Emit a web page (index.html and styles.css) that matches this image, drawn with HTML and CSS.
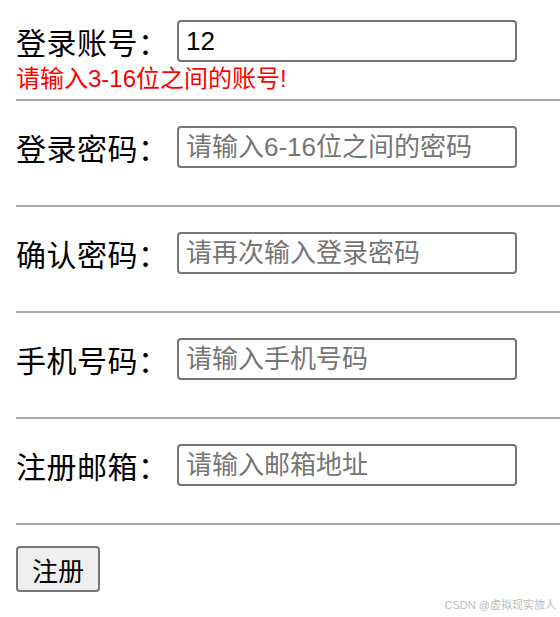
FILE: index.html
```html
<!DOCTYPE html>
<html lang="zh-CN">
  <head>
    <meta charset="UTF-8" />
    <title>注册</title>
    <meta name="viewport" content="width=device-width, initial-scale=1.0" />
    <link rel="stylesheet" href="styles.css">
  </head>
  <body>
    <form class="reg-form" id="reg-form">
      <div class="field first">
        <div class="line">
          <label for="account">登录账号：</label>
          <input type="text" id="account" value="12" />
        </div>
        <div class="tip">请输入3-16位之间的账号!</div>
      </div>
      <hr />
      <div class="field">
        <div class="line">
          <label for="pwd">登录密码：</label>
          <input type="password" id="pwd" placeholder="请输入6-16位之间的密码" />
        </div>
        <div class="tip"></div>
      </div>
      <hr />
      <div class="field">
        <div class="line">
          <label for="pwd2">确认密码：</label>
          <input type="password" id="pwd2" placeholder="请再次输入登录密码" />
        </div>
        <div class="tip"></div>
      </div>
      <hr />
      <div class="field">
        <div class="line">
          <label for="phone">手机号码：</label>
          <input type="text" id="phone" placeholder="请输入手机号码" />
        </div>
        <div class="tip"></div>
      </div>
      <hr />
      <div class="field">
        <div class="line">
          <label for="mail">注册邮箱：</label>
          <input type="text" id="mail" placeholder="请输入邮箱地址" />
        </div>
        <div class="tip"></div>
      </div>
      <hr />
      <div class="actions">
        <button type="submit">注册</button>
      </div>
    </form>
    <div class="mark">CSDN @虚拟现实旅人</div>
  </body>
</html>
```

FILE: styles.css
```css
html {
  height: 100%;
}

body {
  margin: 0;
  font-family: "Liberation Sans", "Noto Sans CJK SC", sans-serif;
  color: #000;
  background: #fff;
}

.reg-form {
  padding: 20px 0 0 16px;
}

.reg-form .field {
  padding-top: 25px;
}

.reg-form .field.first {
  padding-top: 0;
}

.reg-form .line {
  display: flex;
  align-items: center;
  height: 42px;
}

.reg-form label {
  font-size: 30px;
  width: 161px;
  letter-spacing: 0.5px;
  white-space: nowrap;
}

.reg-form input {
  width: 340px;
  height: 42px;
  box-sizing: border-box;
  padding: 0 7px;
  font-family: "Liberation Sans", "Noto Sans CJK SC", sans-serif;
  font-size: 26px;
  color: #000;
  border: 2px solid #767676;
  border-radius: 4px;
  outline: none;
}

.reg-form input::placeholder {
  color: #757575;
}

.reg-form .tip {
  height: 37px;
  font-size: 24px;
  line-height: 34px;
  color: #f00;
}

.reg-form hr {
  margin: 0;
  height: 0;
  border: none;
  border-top: 2px solid #aaa;
}

.reg-form .actions {
  padding-top: 21px;
}

.reg-form button {
  height: 46px;
  padding: 0 14px;
  font-family: "Liberation Sans", "Noto Sans CJK SC", sans-serif;
  font-size: 26px;
  color: #000;
  background: #efefef;
  border: 2px solid #767676;
  border-radius: 4px;
}

.mark {
  position: absolute;
  right: 4px;
  bottom: 5px;
  font-size: 11px;
  color: #bbb;
}
```
